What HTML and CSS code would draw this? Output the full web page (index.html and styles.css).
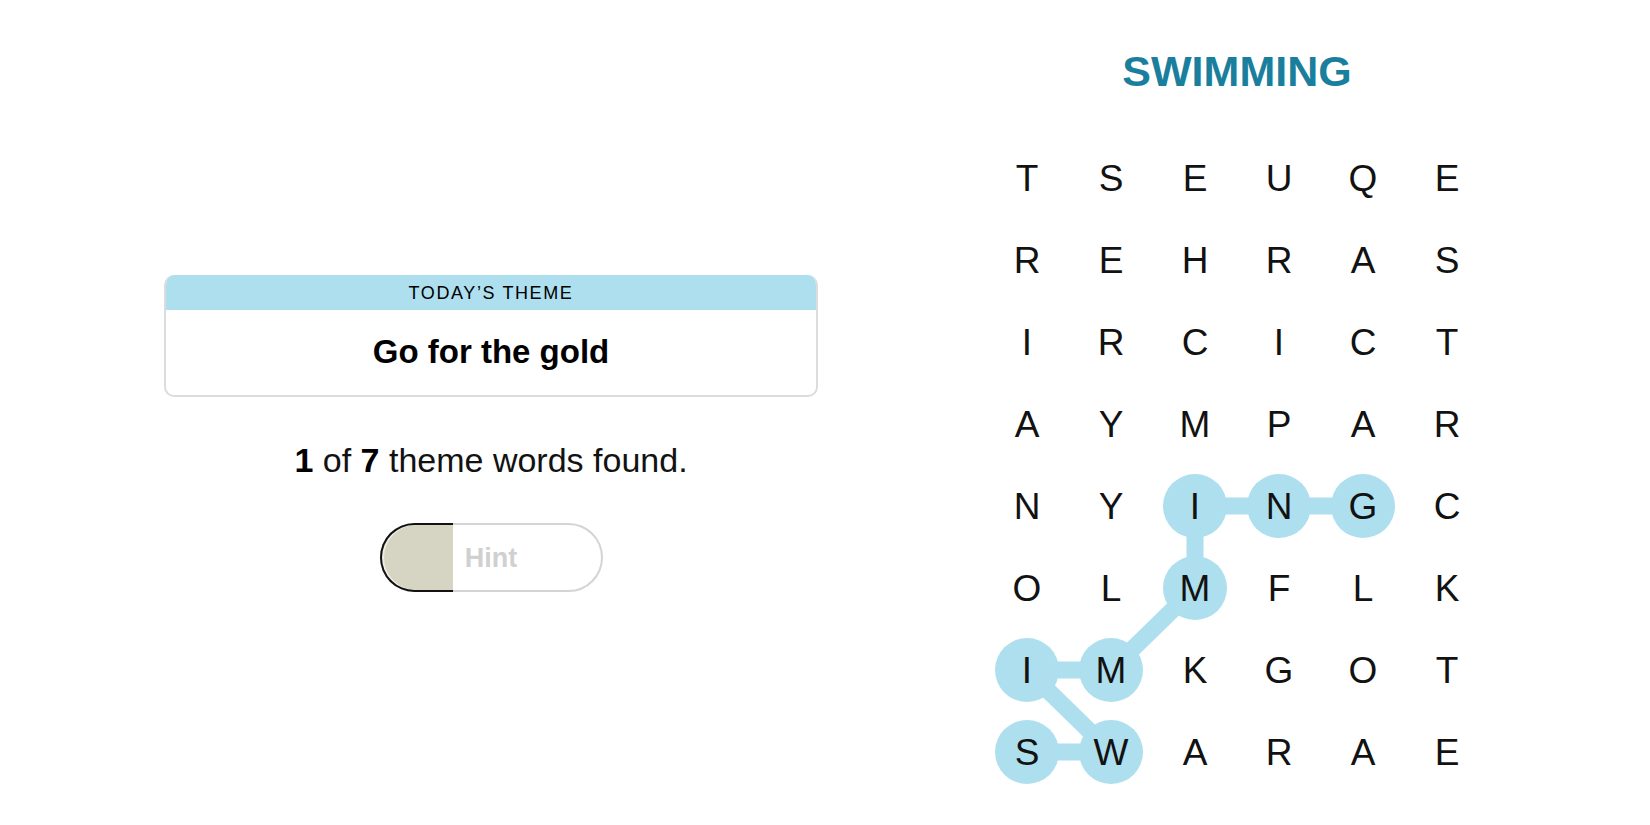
FILE: index.html
```html
<!DOCTYPE html>
<html lang="en">
<head>
<meta charset="utf-8">
<title>Strands</title>
<link rel="stylesheet" href="styles.css">
</head>
<body>
<main class="page">
  <section class="left">
    <div class="theme-card">
      <div class="theme-head">TODAY’S THEME</div>
      <div class="theme-body">Go for the gold</div>
    </div>
    <p class="progress"><b>1</b> of <b>7</b> theme words found.</p>
    <button class="hint">
      <span class="hint-fill"></span>
      <span class="hint-label">Hint</span>
    </button>
  </section>
  <section class="right">
    <h1 class="found-word">SWIMMING</h1>
    <div class="board">
      <svg class="path" width="504" height="656" viewBox="0 0 504 656">
        <g stroke="#aedfee" stroke-width="17" stroke-linecap="butt" fill="none">
          <line x1="42" y1="615" x2="126" y2="615"/>
          <line x1="126" y1="615" x2="42" y2="533"/>
          <line x1="42" y1="533" x2="126" y2="533"/>
          <line x1="126" y1="533" x2="210" y2="451"/>
          <line x1="210" y1="451" x2="210" y2="369"/>
          <line x1="210" y1="369" x2="294" y2="369"/>
          <line x1="294" y1="369" x2="378" y2="369"/>
        </g>
        <g fill="#aedfee">
          <circle cx="42" cy="615" r="32"/>
          <circle cx="126" cy="615" r="32"/>
          <circle cx="42" cy="533" r="32"/>
          <circle cx="126" cy="533" r="32"/>
          <circle cx="210" cy="451" r="32"/>
          <circle cx="210" cy="369" r="32"/>
          <circle cx="294" cy="369" r="32"/>
          <circle cx="378" cy="369" r="32"/>
        </g>
      </svg>
      <div class="grid">
        <span>T</span><span>S</span><span>E</span><span>U</span><span>Q</span><span>E</span>
        <span>R</span><span>E</span><span>H</span><span>R</span><span>A</span><span>S</span>
        <span>I</span><span>R</span><span>C</span><span>I</span><span>C</span><span>T</span>
        <span>A</span><span>Y</span><span>M</span><span>P</span><span>A</span><span>R</span>
        <span>N</span><span>Y</span><span>I</span><span>N</span><span>G</span><span>C</span>
        <span>O</span><span>L</span><span>M</span><span>F</span><span>L</span><span>K</span>
        <span>I</span><span>M</span><span>K</span><span>G</span><span>O</span><span>T</span>
        <span>S</span><span>W</span><span>A</span><span>R</span><span>A</span><span>E</span>
      </div>
    </div>
  </section>
</main>
</body>
</html>
```

FILE: styles.css
```css
* { box-sizing: border-box; }
html, body {
  margin: 0;
  padding: 0;
  background: #ffffff;
  width: 1650px;
  height: 825px;
  overflow: hidden;
}
body {
  font-family: "Liberation Sans", Arial, sans-serif;
  color: #121212;
}
.page {
  display: flex;
  align-items: flex-start;
  padding-left: 164px;
}
.left {
  width: 654px;
  padding-top: 275px;
  display: flex;
  flex-direction: column;
  align-items: center;
}
.theme-card {
  width: 654px;
  border: 2px solid #dcdcdc;
  border-top: none;
  border-radius: 10px;
  overflow: hidden;
}
.theme-head {
  height: 35px;
  background: #aedfee;
  display: flex;
  align-items: center;
  justify-content: center;
  font-size: 18px;
  letter-spacing: 1.6px;
  color: #000;
  margin: 0 -2px;
  padding-top: 1px;
}
.theme-body {
  height: 85px;
  display: flex;
  align-items: center;
  justify-content: center;
  font-size: 33px;
  font-weight: 700;
  color: #000;
  padding-bottom: 2px;
}
.progress {
  margin: 43px 0 0;
  font-size: 34px;
  line-height: 40px;
  color: #121212;
}
.progress b { font-weight: 700; color: #000; }
.hint {
  margin-top: 43px;
  position: relative;
  width: 223px;
  height: 69px;
  border: 2px solid #d4d4d4;
  border-radius: 35px;
  background: #fff;
  padding: 0;
  display: flex;
  align-items: center;
  justify-content: center;
  font-family: "Liberation Sans", Arial, sans-serif;
  cursor: pointer;
}
.hint-fill {
  position: absolute;
  left: -2px;
  top: -2px;
  bottom: -2px;
  width: 73px;
  border: 2px solid #121212;
  border-right: none;
  border-radius: 35px 0 0 35px;
  background: #d6d5c3;
  box-shadow: inset 2px 0 0 #eeeee6;
}
.hint-label {
  position: relative;
  font-size: 27px;
  font-weight: 700;
  color: #d0d0d0;
  padding-top: 1px;
}
.right {
  margin-left: 167px;
  width: 504px;
  padding-top: 46px;
  display: flex;
  flex-direction: column;
  align-items: center;
}
.found-word {
  margin: 0;
  font-size: 43px;
  line-height: 50px;
  font-weight: 700;
  color: #1a7f9c;
  letter-spacing: 0;
}
.board {
  position: relative;
  margin-top: 41px;
  width: 504px;
  height: 656px;
}
.path {
  position: absolute;
  left: 0;
  top: 0;
}
.grid {
  position: relative;
  display: grid;
  grid-template-columns: repeat(6, 84px);
  grid-template-rows: repeat(8, 82px);
}
.grid span {
  display: flex;
  align-items: center;
  justify-content: center;
  font-size: 37px;
  color: #121212;
  padding-top: 1px;
}
```
